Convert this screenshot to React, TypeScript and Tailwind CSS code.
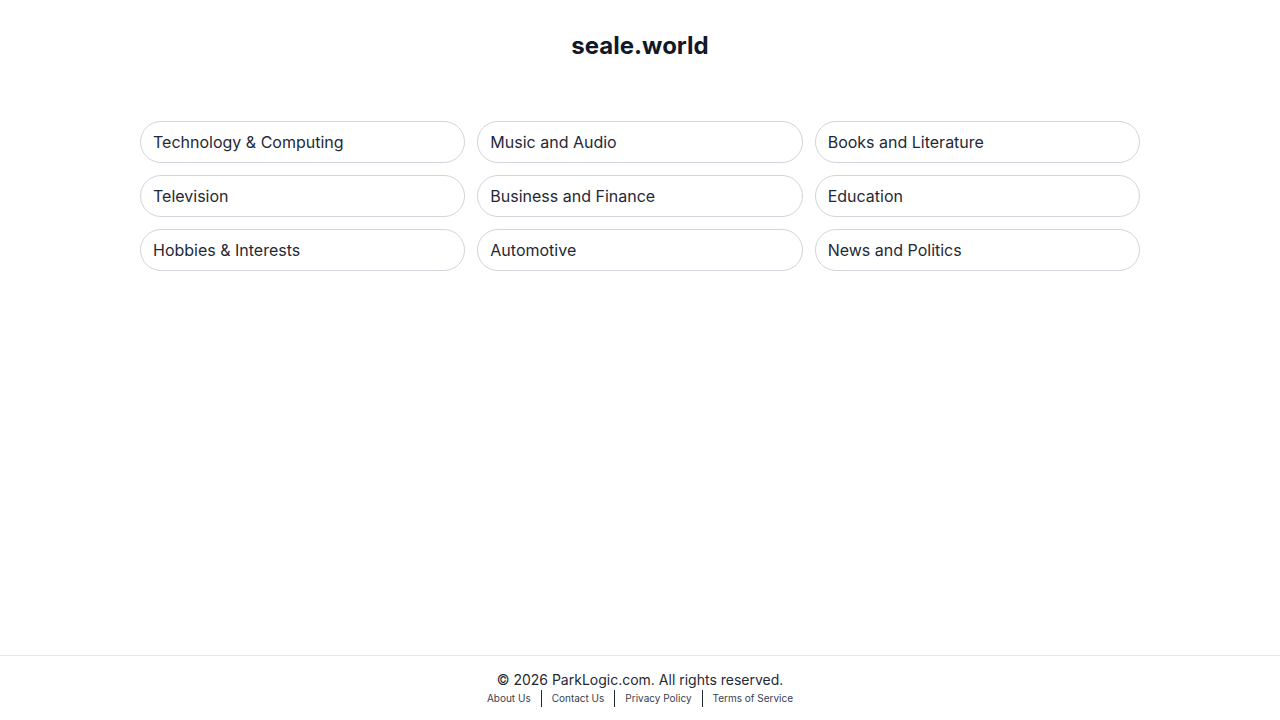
import { FC } from "react";

const categories: string[] = [
  "Technology & Computing",
  "Music and Audio",
  "Books and Literature",
  "Television",
  "Business and Finance",
  "Education",
  "Hobbies & Interests",
  "Automotive",
  "News and Politics",
];

const links: string[] = ["About Us", "Contact Us", "Privacy Policy", "Terms of Service"];

const App: FC = (): JSX.Element => {
  return (
    <div
      className="min-h-screen flex flex-col bg-white text-[#111827]"
      style={{ fontFamily: "Inter, 'Noto Sans', sans-serif" }}
    >
      <main className="flex-1">
        <h1 className="pt-[30px] text-center text-[24px] leading-[32px] font-bold">
          seale.world
        </h1>
        <div className="mx-auto mt-[59px] w-[1000px] grid grid-cols-3 gap-x-[12px] gap-y-[12px]">
          {categories.map((name, idx) => {
            return (
              <a
                key={idx}
                href="#"
                className="h-[42px] flex items-center px-[12px] rounded-full border border-[#d1d5db] text-[16px] text-[#1f2937]"
              >
                {name}
              </a>
            );
          })}
        </div>
      </main>
      <footer className="border-t border-[#e5e7eb] pt-[15px] pb-[13px] text-center">
        <div className="text-[14px] leading-[18px] text-[#1f2937]">
          © 2026 ParkLogic.com. All rights reserved.
        </div>
        <div className="flex justify-center items-center text-[10px] leading-[18px] text-[#374151]">
          {links.map((link, idx) => {
            return (
              <div key={idx} className="flex items-center">
                {idx > 0 && <span className="mx-[10px] h-[17px] w-px bg-[#1f2937]" />}
                <a href="#">{link}</a>
              </div>
            );
          })}
        </div>
      </footer>
    </div>
  );
};

export default App;
